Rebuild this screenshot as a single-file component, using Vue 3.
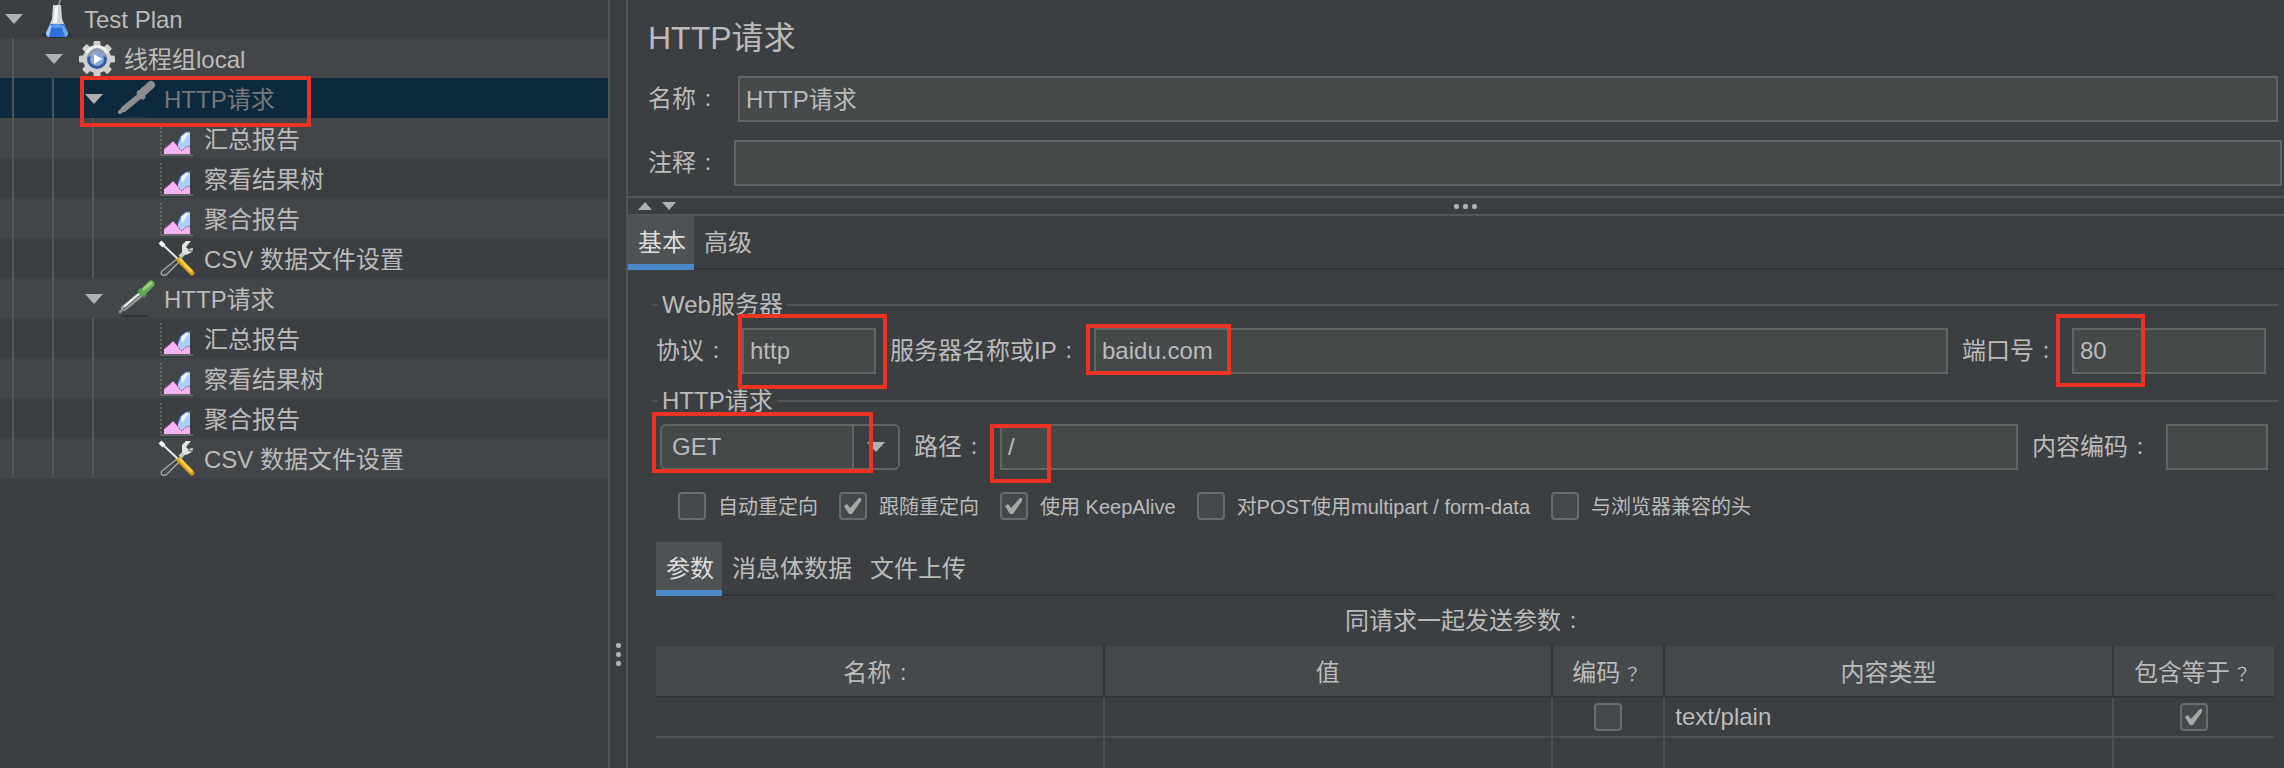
<script setup>
import { ref } from 'vue'

const rows = [
  { level: 0, icon: 'flask', text: 'Test Plan', open: true },
  { level: 1, icon: 'gear', text: '线程组local', open: true },
  { level: 2, icon: 'dropper-off', text: 'HTTP请求', open: true, selected: true },
  { level: 3, icon: 'report', text: '汇总报告' },
  { level: 3, icon: 'report', text: '察看结果树' },
  { level: 3, icon: 'report', text: '聚合报告' },
  { level: 3, icon: 'tools', text: 'CSV 数据文件设置' },
  { level: 2, icon: 'dropper', text: 'HTTP请求', open: true },
  { level: 3, icon: 'report', text: '汇总报告' },
  { level: 3, icon: 'report', text: '察看结果树' },
  { level: 3, icon: 'report', text: '聚合报告' },
  { level: 3, icon: 'tools', text: 'CSV 数据文件设置' },
]

const name = ref('HTTP请求')
const comment = ref('')
const protocol = ref('http')
const server = ref('baidu.com')
const port = ref('80')
const method = ref('GET')
const path = ref('/')
const encoding = ref('')

const options = ref([
  { id: 'auto', text: '自动重定向', on: false },
  { id: 'follow', text: '跟随重定向', on: true },
  { id: 'keep', text: '使用 KeepAlive', on: true },
  { id: 'multi', text: '对POST使用multipart / form-data', on: false },
  { id: 'compat', text: '与浏览器兼容的头', on: false },
])

const encode = ref(false)
const includeEquals = ref(true)
</script>

<template>
  <div class="app">
    <nav class="tree-pane" aria-label="测试计划">
      <ul class="tree">
        <li v-for="(row, i) in rows" :key="i" class="row" :class="{ selected: row.selected }">
          <span v-for="n in row.level" :key="n" class="guide"></span>
          <span class="toggle">
            <svg v-if="row.open" width="18" height="10" viewBox="0 0 18 10"><path d="M0 0H18L9 10Z" fill="#afb1b3" /></svg>
          </span>
          <svg class="icon" width="38" height="40" viewBox="0 0 38 40" aria-hidden="true">
            <g v-if="row.icon === 'flask'">
              <ellipse cx="19" cy="37" rx="15" ry="3" fill="#2c3033" />
              <path d="M20 8L23 0" stroke="#8b8d8e" stroke-width="2" />
              <path d="M15 7H23L24 21L30 35Q30 39 26 39H12Q8 39 8 35L14 21Z" fill="#cfd3d6" />
              <path d="M17 8H20L19 25H15Z" fill="#f4f4f2" />
              <path d="M12 26H26L30 35Q30 39 26 39H12Q8 39 8 35Z" fill="#2d6fdc" />
              <path d="M12 27L8 35Q8 38 11 39L14 27Z" fill="#9cc6f7" />
              <path d="M25 27L30 35Q30 38 27 39L23 27Z" fill="#70a8f0" />
              <ellipse cx="19" cy="28" rx="6" ry="2" fill="#5b9cf0" />
            </g>
            <g v-else-if="row.icon === 'gear'">
              <g fill="#d0d0cd">
                <rect v-for="a in [0, 45, 90, 135]" :key="a" x="15.500" y="3" width="7" height="36" rx="1.500" :transform="`rotate(${a} 19 21)`" />
                <circle cx="19" cy="21" r="14" />
              </g>
              <path d="M7 14A14 14 0 0 1 31 14L19 21Z" fill="#efefed" />
              <circle cx="19" cy="21" r="10" fill="#2f5a9f" />
              <path d="M10 19A9 9 0 0 1 28 19Q19 15 10 19Z" fill="#8d9bb5" />
              <circle cx="19" cy="21" r="7" fill="#86a6d8" />
              <path d="M16 16L24 21L16 26Z" fill="#fff" />
            </g>
            <g v-else-if="row.icon === 'dropper-off'" fill="none" stroke="#8e8e8e" stroke-linecap="round">
              <path d="M2 34L8 29" stroke-width="4" />
              <path d="M6 31L23 17" stroke-width="6" />
              <path d="M21 15L25 19" stroke-width="5" />
              <path d="M24 15L33 7" stroke-width="8" />
              <path d="M2 39H30" stroke="#1b3346" stroke-width="1" />
            </g>
            <g v-else-if="row.icon === 'dropper'" fill="none" stroke-linecap="round">
              <path d="M4 38H30" stroke="#303335" stroke-width="2" />
              <path d="M2 34L7 29" stroke="#8a8d8e" stroke-width="3" />
              <path d="M6 30L22 17" stroke="#989b9b" stroke-width="6" />
              <path d="M7 28L22 15" stroke="#eef0ee" stroke-width="2" />
              <path d="M5 32L21 18" stroke="#55595a" stroke-width="1" />
              <path d="M22 13L26 17" stroke="#4a8f43" stroke-width="5" />
              <path d="M25 14L33 6" stroke="#63a854" stroke-width="7" />
              <path d="M26 11L33 5" stroke="#9bd07f" stroke-width="3" />
            </g>
            <g v-else-if="row.icon === 'report'">
              <path d="M3 5V37" stroke="#66696b" stroke-width="2" stroke-dasharray="2 2" fill="none" />
              <path d="M2 37H35" stroke="#85888a" stroke-width="1" />
              <path d="M20 36V25L23 18L28 14H32V36Z" fill="#a9d0fa" />
              <path d="M23 19L28 15H31L24 25Z" fill="#f3f8fd" />
              <path d="M20 26L23 18L28 14H32" stroke="#4f80c4" fill="none" />
              <path d="M6 36V31L12 26L15 23L18 26L21 30L24 33L28 29L32 28V36Z" fill="#f1b5f3" />
              <path d="M6 31L12 26L15 23L18 26L21 30L24 33L28 29L32 28" stroke="#c03c80" stroke-width="1" stroke-dasharray="2 1" fill="none" />
            </g>
            <g v-else>
              <path d="M22 19L28 13" stroke="#c9cbcb" stroke-width="4" />
              <path d="M33 3L28 3L24 7L24 14L28 17L34 14L35 10L30 11L28 9Z" fill="#e4e5e3" />
              <path d="M30 12L34 13" stroke="#868989" stroke-width="2" />
              <path d="M19 21L4 33Q2 36 5 37Q7 38 9 36L21 24" fill="#393c3e" stroke="#a3a5a5" stroke-width="1.500" />
              <path d="M6 35L16 26" stroke="#777a7b" stroke-width="1" stroke-dasharray="2 1" />
              <path d="M3 5L20 21" stroke="#e9e9e7" stroke-width="2" />
              <path d="M2 4L6 8" stroke="#f4f4f2" stroke-width="4" />
              <path d="M21 22L34 35" stroke="#d99a1a" stroke-width="5" stroke-linecap="round" />
              <path d="M22 21L33 33" stroke="#f9cd3e" stroke-width="3" stroke-linecap="round" />
            </g>
          </svg>
          <span class="row-text">{{ row.text }}</span>
          <span v-if="row.selected" class="mark mark-tree"></span>
        </li>
      </ul>
    </nav>

    <div class="splitter">
      <span class="dot"></span><span class="dot"></span><span class="dot"></span>
    </div>

    <main class="editor">
      <header class="head">
        <h1>HTTP请求</h1>
        <div class="line name-line">
          <label for="name" class="w-name">名称<span class="p">：</span></label>
          <input id="name" v-model="name" type="text" class="grow">
        </div>
        <div class="line">
          <label for="comment" class="w-short">注释<span class="p">：</span></label>
          <input id="comment" v-model="comment" type="text" class="grow">
        </div>
      </header>

      <div class="collapse">
        <button type="button" aria-label="收起"><svg width="14" height="8" viewBox="0 0 14 8"><path d="M7 0L14 8H0Z" fill="#afb1b3" /></svg></button>
        <button type="button" aria-label="展开"><svg width="14" height="8" viewBox="0 0 14 8"><path d="M0 0H14L7 8Z" fill="#afb1b3" /></svg></button>
        <span class="dots"><span class="dot"></span><span class="dot"></span><span class="dot"></span></span>
      </div>

      <div class="tabs" role="tablist">
        <button type="button" role="tab" class="active">基本</button>
        <button type="button" role="tab">高级</button>
      </div>

      <div class="body">
        <fieldset class="web">
          <legend>Web服务器</legend>
          <div class="line">
            <label for="protocol" class="w-short">协议<span class="p">：</span></label>
            <span class="field w-protocol">
              <input id="protocol" v-model="protocol" type="text">
              <span class="mark mark-protocol"></span>
            </span>
            <label for="server" class="next w-server">服务器名称或IP<span class="p">：</span></label>
            <span class="field grow">
              <input id="server" v-model="server" type="text">
              <span class="mark mark-server"></span>
            </span>
            <label for="port" class="next w-port">端口号<span class="p">：</span></label>
            <span class="field w-portfield">
              <input id="port" v-model="port" type="text">
              <span class="mark mark-port"></span>
            </span>
          </div>
        </fieldset>

        <fieldset class="request">
          <legend>HTTP请求</legend>
          <div class="line">
            <span class="field w-method">
              <select v-model="method" aria-label="方法">
                <option>GET</option>
                <option>POST</option>
              </select>
              <span class="arrow"><svg width="18" height="10" viewBox="0 0 18 10"><path d="M0 0H18L9 10Z" fill="#afb1b3" /></svg></span>
              <span class="mark mark-method"></span>
            </span>
            <label for="path" class="next w-short">路径<span class="p">：</span></label>
            <span class="field grow">
              <input id="path" v-model="path" type="text">
              <span class="mark mark-path"></span>
            </span>
            <label for="encoding" class="next w-encoding">内容编码<span class="p">：</span></label>
            <span class="field w-encfield"><input id="encoding" v-model="encoding" type="text"></span>
          </div>
        </fieldset>

        <div class="checks">
          <label v-for="o in options" :key="o.id"><input v-model="o.on" type="checkbox"><span>{{ o.text }}</span></label>
        </div>

        <section class="params">
          <div class="tabs" role="tablist">
            <button type="button" role="tab" class="active">参数</button>
            <button type="button" role="tab">消息体数据</button>
            <button type="button" role="tab">文件上传</button>
          </div>
          <table>
            <caption>同请求一起发送参数<span class="p">：</span></caption>
            <colgroup>
              <col class="c-wide"><col class="c-wide"><col class="c-enc"><col class="c-wide"><col class="c-inc">
            </colgroup>
            <thead>
              <tr>
                <th>名称<span class="p">：</span></th>
                <th>值</th>
                <th>编码<span class="p">？</span></th>
                <th>内容类型</th>
                <th>包含等于<span class="p">？</span></th>
              </tr>
            </thead>
            <tbody>
              <tr>
                <td></td>
                <td></td>
                <td class="tick"><input v-model="encode" type="checkbox" aria-label="编码"></td>
                <td>text/plain</td>
                <td class="tick"><input v-model="includeEquals" type="checkbox" aria-label="包含等于"></td>
              </tr>
              <tr><td></td><td></td><td></td><td></td><td></td></tr>
            </tbody>
          </table>
        </section>
      </div>
    </main>
  </div>
</template>

<style>
body {
  margin: 0;
  background: #3c3f41;
}
</style>

<style scoped>
.app,
.app * {
  box-sizing: border-box;
}

.app {
  display: flex;
  height: 100vh;
  overflow: hidden;
  background: #3c3f41;
  color: #bbb;
  font: 24px/28px "Liberation Sans", "Noto Sans CJK SC", sans-serif;
  white-space: nowrap;
}

button,
input,
select {
  margin: 0;
  color: inherit;
  font: inherit;
}

button {
  padding: 0;
  border: 0;
  background: none;
}

/* Full-width punctuation, centred in its cell */
.p {
  display: inline-block;
  width: 24px;
  font-family: "Noto Sans CJK TC", sans-serif;
  font-size: 18px;
  text-align: center;
}

.mark {
  position: absolute;
  border: 4px solid #eb3223;
  pointer-events: none;
}

/* Tree */
.tree-pane {
  flex: 0 0 610px;
  overflow: hidden;
  border-right: 2px solid #555;
}

.tree {
  margin: -2px 0 0;
  padding: 0;
  list-style: none;
}

.row {
  position: relative;
  display: flex;
  height: 40px;
}

.row:nth-child(even) {
  background: #434648;
}

.row.selected {
  background: #0d293e;
  color: #777;
}

.guide {
  width: 28px;
  margin-left: 12px;
  border-left: 2px solid #555;
}

.row.selected .guide {
  border-color: #4b5257;
}

.toggle {
  display: flex;
  align-items: center;
  justify-content: center;
  width: 28px;
  margin-right: 10px;
  padding-top: 2px;
}

.icon {
  margin-right: 8px;
}

.row-text {
  line-height: 44px;
}

.mark-tree {
  top: -2px;
  bottom: -9px;
  left: 80px;
  z-index: 1;
  width: 231px;
}

/* Splitters */
.splitter {
  display: flex;
  flex: 0 0 18px;
  flex-direction: column;
  align-items: center;
  justify-content: flex-end;
  gap: 4px;
  padding-bottom: 102px;
  border-right: 2px solid #555;
}

.dot {
  width: 5px;
  height: 5px;
  border-radius: 2px;
  background: #afb1b3;
}

.editor {
  flex: 1;
  min-width: 0;
}

.collapse {
  display: flex;
  align-items: center;
  gap: 10px;
  height: 20px;
  padding-left: 10px;
  border: solid #555;
  border-width: 2px 0;
}

.collapse button {
  display: flex;
}

.dots {
  display: flex;
  flex: 1;
  justify-content: center;
  gap: 4px;
  margin-right: 40px;
}

/* Name and comment */
.head {
  padding: 0 2px 10px 20px;
}

h1 {
  margin: 0;
  font-size: 32px;
  font-weight: 400;
  line-height: 76px;
}

.line {
  display: flex;
  align-items: center;
  height: 46px;
}

.grow {
  flex: 1;
  min-width: 0;
}

input[type="text"],
select {
  height: 46px;
  padding: 0 6px;
  border: 2px solid #646464;
  border-radius: 0;
  outline: 0;
  background: #45494a;
}

.name-line {
  margin: 0 4px 18px 0;
}

.name-line input[type="text"] {
  padding-bottom: 4px;
}

.w-name { width: 90px; }
.w-short { width: 86px; }
.w-protocol { width: 134px; }
.w-server { width: 204px; }
.w-port { width: 110px; }
.w-portfield { width: 194px; }
.w-method { width: 240px; }
.w-encoding { width: 134px; }
.w-encfield { width: 102px; }

/* Tabs */
.tabs {
  display: flex;
  height: 54px;
  box-shadow: inset 0 -2px #323537;
}

.tabs button {
  padding: 6px 8px 0 10px;
  border-bottom: 6px solid transparent;
}

.tabs .active {
  border-color: #4a88c7;
  background: #4e5254;
  color: #ddd;
}

/* Groups */
.body {
  padding: 21px 6px 0 24px;
}

fieldset {
  min-width: 0;
  margin: 0;
  padding: 9px 12px 0 4px;
  border: 0;
  border-top: 2px solid #555;
}

legend {
  margin-left: 2px;
  padding: 0 4px;
}

.request {
  margin-top: 13px;
  padding-right: 10px;
  padding-left: 8px;
}

.request legend {
  margin-left: -2px;
}

.field {
  position: relative;
  display: flex;
}

.field input {
  width: 100%;
}

.next {
  margin-left: 14px;
}

.field select {
  width: 100%;
  padding: 0 50px 0 10px;
  border-radius: 6px;
  appearance: none;
}

.arrow {
  position: absolute;
  top: 2px;
  right: 2px;
  bottom: 2px;
  display: flex;
  align-items: center;
  justify-content: center;
  width: 46px;
  border-left: 2px solid #646464;
  border-radius: 0 4px 4px 0;
  background: #3c3f41;
  pointer-events: none;
}

.mark-protocol { top: -14px; right: -11px; bottom: -15px; left: -4px; }
.mark-server { top: -4px; bottom: -1px; left: -8px; width: 145px; }
.mark-port { top: -14px; bottom: -13px; left: -16px; width: 89px; }
.mark-method { top: -12px; bottom: -3px; left: -8px; width: 221px; }
.mark-path { top: 0; bottom: -13px; left: -10px; width: 61px; }

/* Tick boxes */
input[type="checkbox"] {
  display: block;
  flex: none;
  width: 28px;
  height: 28px;
  border: 2px solid #6b6b6b;
  border-radius: 4px;
  background: #43494a;
  appearance: none;
}

input[type="checkbox"]:checked::before {
  display: block;
  width: 24px;
  height: 24px;
  background: #a7a7a7;
  clip-path: polygon(3px 12px, 6px 10px, 9px 14px, 18px 4px, 20px 4px, 20px 7px, 11px 20px, 8px 20px);
  content: "";
}

.checks {
  display: flex;
  gap: 21px;
  margin: 22px 0 22px 26px;
  font-size: 20px;
  line-height: 30px;
}

.checks label {
  display: flex;
  gap: 12px;
  height: 28px;
}

/* Parameters */
.params {
  margin: 0 4px;
}

table {
  width: 100%;
  border-collapse: separate;
  border-spacing: 0;
  table-layout: fixed;
}

caption {
  height: 50px;
  line-height: 50px;
}

.c-wide { width: 448px; }
.c-enc { width: 112px; }
.c-inc { width: 160px; }

th {
  height: 52px;
  padding: 4px 0 0;
  border-right: 2px solid #323537;
  border-bottom: 2px solid #323537;
  background: #45494b;
  font-weight: 400;
}

td {
  height: 40px;
  padding: 0 10px;
  border-right: 2px solid #505050;
  border-bottom: 2px solid #505050;
}

th:last-child,
td:last-child {
  border-right: 0;
}

.tick input[type="checkbox"] {
  margin: 0 auto;
}
</style>
